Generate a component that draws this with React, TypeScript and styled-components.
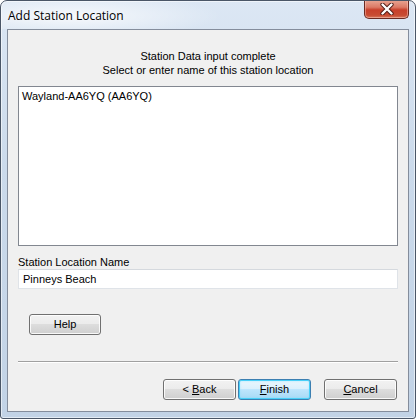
import React from "react";
import styled, { createGlobalStyle } from "styled-components";

const GlobalStyle = createGlobalStyle`
	html, body {
		margin: 0;
		padding: 0;
		background: #ffffff;
	}
	body {
		font-family: "Liberation Sans", Arial, sans-serif;
		font-size: 11px;
		color: #000;
	}
`;

const Window = styled.div`
	box-sizing: border-box;
	width: 416px;
	height: 419px;
	display: flex;
	flex-direction: column;
	border: 1px solid #4a5667;
	border-radius: 7px 7px 3px 3px;
	background: linear-gradient(180deg, #dce7f4 0%, #cbdaeb 40%, #c2d3e6 100%);
	box-shadow: inset 0 0 0 1px rgba(255, 255, 255, 0.55);
	overflow: hidden;
`;

const TitleBar = styled.div`
	height: 28px;
	display: flex;
	justify-content: space-between;
	align-items: flex-start;
	background: radial-gradient(
		ellipse 150px 22px at 70px 15px,
		rgba(255, 255, 255, 0.75) 0%,
		rgba(255, 255, 255, 0) 100%
	);
`;

const Title = styled.span`
	font-family: "Open Sans", "Noto Sans", sans-serif;
	font-size: 12px;
	line-height: 16px;
	padding: 7px 0 0 7px;
	color: #000;
	text-shadow: 0 0 6px rgba(255, 255, 255, 0.9);
`;

const CloseButton = styled.div`
	box-sizing: border-box;
	width: 45px;
	height: 19px;
	margin: -1px 6px 0 0;
	display: flex;
	align-items: center;
	justify-content: center;
	border: 1px solid #6a2a22;
	border-top: none;
	border-radius: 0 0 5px 5px;
	background: linear-gradient(
		180deg,
		#e9a795 0%,
		#dc7a66 40%,
		#c8402b 55%,
		#c84c33 85%,
		#d97a5e 100%
	);
	box-shadow: inset 0 0 0 1px rgba(255, 210, 200, 0.45);
`;

const Client = styled.div`
	flex: 1;
	margin: 0 6px 6px 6px;
	border: 1px solid #848d9c;
	background: #f0f0f0;
	display: flex;
	flex-direction: column;
	padding: 19px 10px 0 10px;
`;

const Header = styled.div`
	text-align: center;
	line-height: 14px;
`;

const ListBox = styled.div`
	box-sizing: border-box;
	height: 160px;
	margin-top: 9px;
	border: 1px solid #828790;
	background: #fff;
	padding: 2px 3px;
	line-height: 14px;
`;

const FieldLabel = styled.div`
	margin-top: 10px;
	line-height: 13px;
`;

const TextBox = styled.div`
	box-sizing: border-box;
	height: 20px;
	border: 1px solid #dfe3e8;
	border-top-color: #d5d9de;
	background: #fff;
	padding: 0 4px;
	line-height: 18px;
`;

const Button = styled.div<{ $default?: boolean; $width?: number }>`
	box-sizing: border-box;
	width: ${(p) => p.$width ?? 73}px;
	height: 21px;
	display: flex;
	align-items: center;
	justify-content: center;
	white-space: pre;
	border: 1px solid ${(p) => (p.$default ? "#3c7fb1" : "#707070")};
	border-radius: 3px;
	background: ${(p) =>
		p.$default
			? "linear-gradient(180deg, #eaf6fd 0%, #d9f0fc 50%, #bee6fd 50%, #a7d9f5 100%)"
			: "linear-gradient(180deg, #f2f2f2 0%, #ebebeb 50%, #dddddd 50%, #cfcfcf 100%)"};
	box-shadow: ${(p) =>
		p.$default
			? "inset 0 0 0 1px #48d0f8, inset 0 0 2px 1px rgba(120, 220, 255, 0.6)"
			: "inset 0 0 0 1px rgba(255, 255, 255, 0.85)"};
	color: #000;
	line-height: 13px;
`;

const HelpRow = styled.div`
	margin-top: 25px;
	padding-left: 11px;
`;

const Separator = styled.div`
	margin-top: 26px;
	height: 0;
	border-top: 1px solid #a0a0a0;
	border-bottom: 1px solid #ffffff;
`;

const ButtonRow = styled.div`
	margin-top: 16px;
	display: flex;
	justify-content: flex-end;
	gap: 2px;
	padding-right: 1px;
`;

const Spacer = styled.div`
	width: 9px;
`;

const Key = styled.span`
	text-decoration: underline;
	text-underline-offset: 1px;
`;

const CloseGlyph = () => (
	<svg width="14" height="12" viewBox="0 0 14 12">
		<path
			d="M2.5 1.5 L11.5 10.5 M11.5 1.5 L2.5 10.5"
			stroke="#4d1a14"
			strokeWidth="4.2"
			strokeLinecap="round"
		/>
		<path
			d="M2.5 1.5 L11.5 10.5 M11.5 1.5 L2.5 10.5"
			stroke="#ffffff"
			strokeWidth="2.4"
			strokeLinecap="round"
		/>
	</svg>
);

export default function App() {
	return (
		<>
			<GlobalStyle />
			<Window>
				<TitleBar>
					<Title>Add Station Location</Title>
					<CloseButton>
						<CloseGlyph />
					</CloseButton>
				</TitleBar>
				<Client>
					<Header>
						<div>Station Data input complete</div>
						<div>Select or enter name of this station location</div>
					</Header>
					<ListBox>Wayland-AA6YQ (AA6YQ)</ListBox>
					<FieldLabel>Station Location Name</FieldLabel>
					<TextBox>Pinneys Beach</TextBox>
					<HelpRow>
						<Button $width={72}>Help</Button>
					</HelpRow>
					<Separator />
					<ButtonRow>
						<Button>
							<span>
								{"< "}
								<Key>B</Key>ack
							</span>
						</Button>
						<Button $default>
							<span>
								<Key>F</Key>inish
							</span>
						</Button>
						<Spacer />
						<Button>
							<span>
								<Key>C</Key>ancel
							</span>
						</Button>
					</ButtonRow>
				</Client>
			</Window>
		</>
	);
}
